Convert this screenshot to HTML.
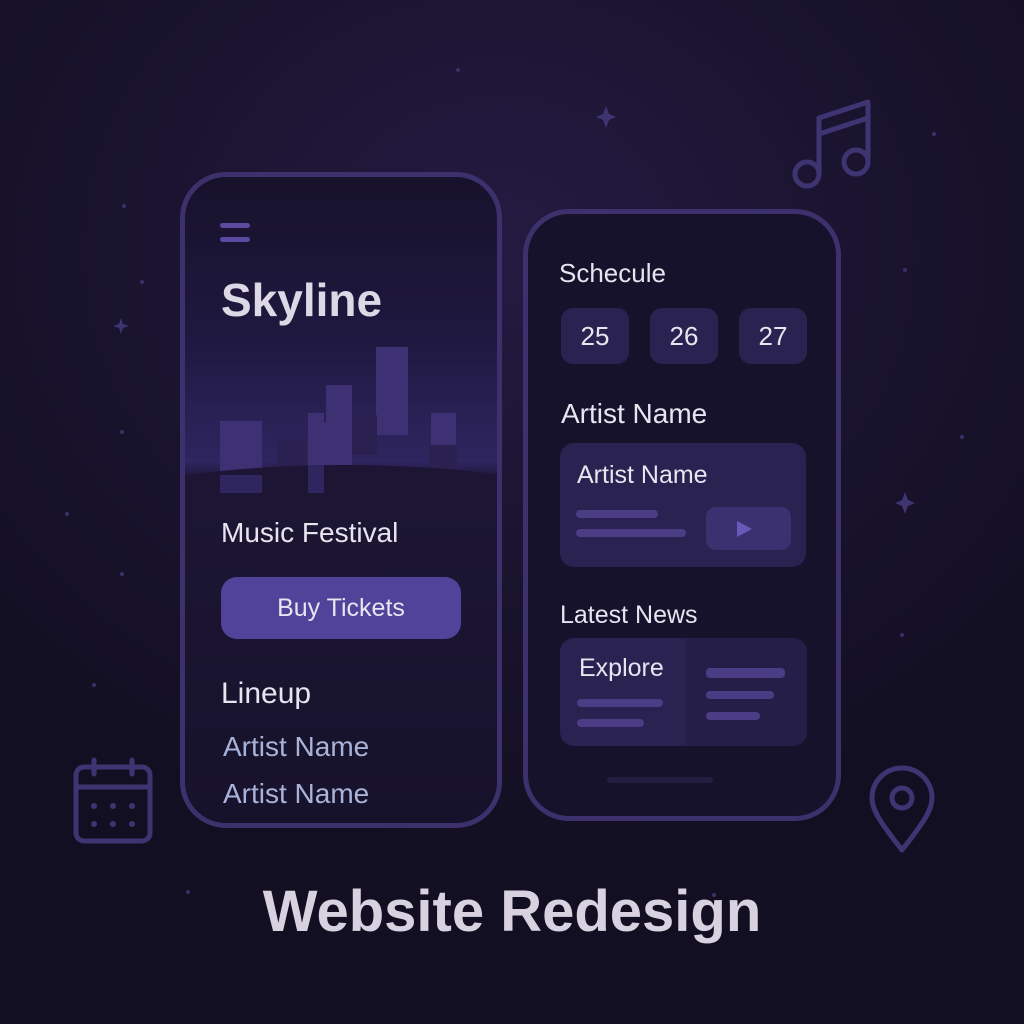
<!DOCTYPE html>
<html><head><meta charset="utf-8"><style>
*{margin:0;padding:0;box-sizing:border-box}
body{width:1024px;height:1024px;overflow:hidden;font-family:"Liberation Sans",sans-serif;position:relative;
background:radial-gradient(ellipse 700px 600px at 500px 250px,#241b42 0%,#1a1430 50%,#130f22 100%);}
.a{position:absolute}
.phone{position:absolute;border:5px solid #3c306d;border-radius:46px;background:#17122b;overflow:hidden}
.t{position:absolute;color:#e8e4f0;white-space:nowrap}
.bar{position:absolute;background:#4a3d85;border-radius:4px;height:8px}
.card{position:absolute;background:#2a2250;border-radius:14px}
.dot{position:absolute;width:4px;height:4px;border-radius:50%;background:#3b3168}
</style></head><body>
<div class="dot" style="left:456px;top:68px"></div>
<div class="dot" style="left:122px;top:204px"></div>
<div class="dot" style="left:140px;top:280px"></div>
<div class="dot" style="left:120px;top:430px"></div>
<div class="dot" style="left:65px;top:512px"></div>
<div class="dot" style="left:120px;top:572px"></div>
<div class="dot" style="left:92px;top:683px"></div>
<div class="dot" style="left:186px;top:890px"></div>
<div class="dot" style="left:932px;top:132px"></div>
<div class="dot" style="left:903px;top:268px"></div>
<div class="dot" style="left:960px;top:435px"></div>
<div class="dot" style="left:900px;top:633px"></div>
<div class="dot" style="left:795px;top:264px"></div>
<div class="dot" style="left:712px;top:893px"></div>
<svg class="a" style="left:0;top:0" width="1024" height="1024">
<g fill="#3f3472">
<path d="M606 106 L609 114 L616 117 L609 120 L606 128 L603 120 L596 117 L603 114Z"/>
<path d="M121 318 L123 324 L129 326 L123 328 L121 334 L119 328 L113 326 L119 324Z"/>
<path d="M905 492 L908 500 L915 503 L908 506 L905 514 L902 506 L895 503 L902 500Z"/>
</g>
<g fill="none" stroke="#3f3472" stroke-width="5" stroke-linecap="round" stroke-linejoin="round">
<circle cx="807" cy="174" r="12"/><circle cx="856" cy="162" r="12"/>
<path d="M819 174 V118 L868 102 V162"/><path d="M819 134 L868 118"/>
<rect x="76" y="767" width="74" height="74" rx="8"/><path d="M76 787 H150"/>
<path d="M94 760 V774 M132 760 V774"/>
<path d="M902 850 C880 822 872 810 872 798 A30 30 0 0 1 932 798 C932 810 924 822 902 850Z"/>
<circle cx="902" cy="798" r="10"/>
</g>
<g fill="#3f3472"><circle cx="94" cy="806" r="3"/><circle cx="113" cy="806" r="3"/><circle cx="132" cy="806" r="3"/><circle cx="94" cy="824" r="3"/><circle cx="113" cy="824" r="3"/><circle cx="132" cy="824" r="3"/></g>
</svg>

<div class="phone" style="left:180px;top:172px;width:322px;height:656px;background:linear-gradient(#17122b 0%,#1f1840 25%,#2f2560 44%,#1c1634 47%,#17122b 100%)">
<svg class="a" style="left:-1px;top:-2px" width="322" height="330">
<rect x="36" y="48" width="30" height="5" rx="2.5" fill="#5a4aa0"/><rect x="36" y="62" width="30" height="5" rx="2.5" fill="#5a4aa0"/>
<g fill="#3d3173">
<rect x="36" y="246" width="42" height="72"/>
<rect x="124" y="238" width="16" height="80"/>
<path d="M124 238 L142 248 V290 H124Z"/>
<rect x="142" y="210" width="26" height="80"/>
<rect x="192" y="172" width="32" height="88"/>
<rect x="247" y="238" width="25" height="32"/>
</g>
<g fill="#2a2150"><rect x="93" y="264" width="30" height="40"/><rect x="168" y="240" width="25" height="40"/><rect x="245" y="270" width="28" height="30"/></g>
<path d="M0 300 Q160 280 322 300 V330 H0Z" fill="#1c1634"/>
<rect x="36" y="300" width="42" height="18" fill="#2f2660"/>
<rect x="124" y="290" width="16" height="28" fill="#2f2660"/>
</svg>
<div class="t" style="left:36px;top:96px;font-size:46px;font-weight:bold;color:#dcd8e6">Skyline</div>
<div class="t" style="left:36px;top:340px;font-size:28px">Music Festival</div>
<div class="a" style="left:36px;top:400px;width:240px;height:62px;border-radius:16px;background:#52439a;color:#e8e4f0;font-size:25px;text-align:center;line-height:62px">Buy Tickets</div>
<div class="t" style="left:36px;top:500px;font-size:30px">Lineup</div>
<div class="t" style="left:38px;top:554px;font-size:28px;color:#a9b3d9">Artist Name</div>
<div class="t" style="left:38px;top:601px;font-size:28px;color:#a9b3d9">Artist Name</div>
</div>

<div class="phone" style="left:523px;top:209px;width:318px;height:612px">
<div class="t" style="left:31px;top:44px;font-size:26px">Schecule</div>
<div class="card" style="left:33px;top:94px;width:68px;height:56px;border-radius:12px;font-size:26px;color:#e8e4f0;text-align:center;line-height:56px">25</div>
<div class="card" style="left:122px;top:94px;width:68px;height:56px;border-radius:12px;font-size:26px;color:#e8e4f0;text-align:center;line-height:56px">26</div>
<div class="card" style="left:211px;top:94px;width:68px;height:56px;border-radius:12px;font-size:26px;color:#e8e4f0;text-align:center;line-height:56px">27</div>
<div class="t" style="left:33px;top:184px;font-size:28px">Artist Name</div>
<div class="card" style="left:32px;top:229px;width:246px;height:124px">
<div class="t" style="left:17px;top:18px;font-size:25px">Artist Name</div>
<div class="bar" style="left:16px;top:67px;width:82px"></div>
<div class="bar" style="left:16px;top:86px;width:110px"></div>
<div class="a" style="left:146px;top:64px;width:85px;height:43px;border-radius:10px;background:#3c3170"></div>
<div class="a" style="left:177px;top:78px;width:0;height:0;border-left:15px solid #6a58b8;border-top:8px solid transparent;border-bottom:8px solid transparent"></div>
</div>
<div class="t" style="left:32px;top:387px;font-size:25px">Latest News</div>
<div class="card" style="left:32px;top:424px;width:247px;height:108px;overflow:hidden">
<div class="a" style="left:126px;top:0;width:121px;height:108px;background:#251e48"></div>
<div class="t" style="left:19px;top:16px;font-size:25px">Explore</div>
<div class="bar" style="left:17px;top:61px;width:86px"></div>
<div class="bar" style="left:17px;top:81px;width:67px"></div>
<div class="bar" style="left:146px;top:30px;width:79px;height:10px"></div>
<div class="bar" style="left:146px;top:53px;width:68px"></div>
<div class="bar" style="left:146px;top:74px;width:54px"></div>
</div>
<div class="a" style="left:79px;top:563px;width:106px;height:6px;border-radius:3px;background:#241d42"></div>
</div>

<div class="t" style="left:0;width:1024px;text-align:center;top:878px;font-size:58px;font-weight:bold;color:#d8d2e0">Website Redesign</div>
</body></html>
